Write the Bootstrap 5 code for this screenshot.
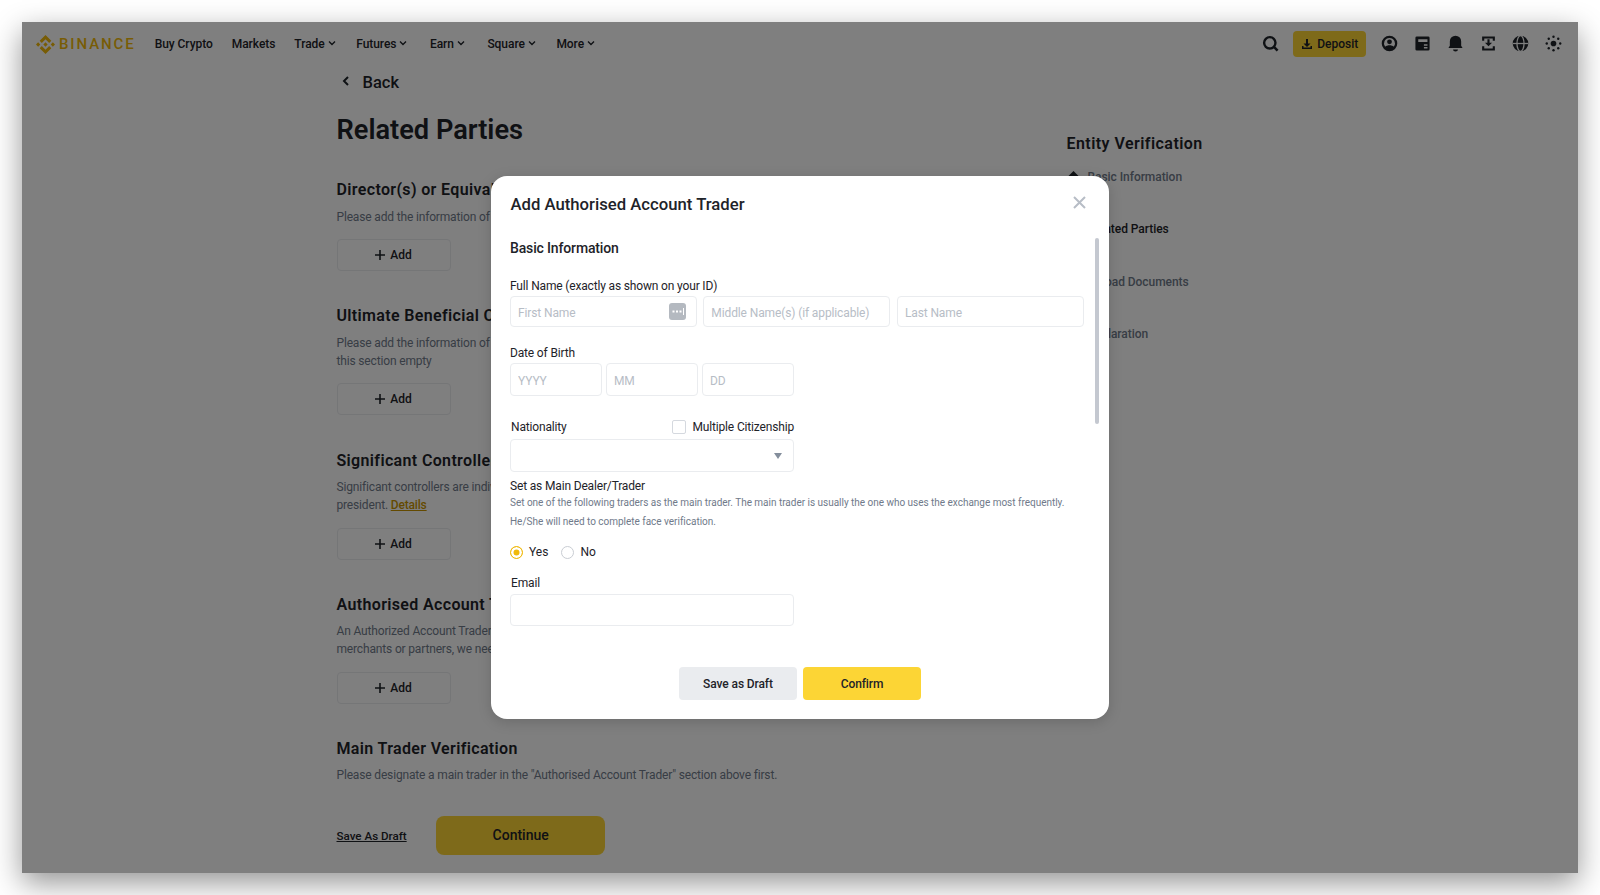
<!DOCTYPE html>
<html lang="en">
<head>
  <meta charset="UTF-8">
  <meta name="viewport" content="width=device-width, initial-scale=1.0">
  <title>Related Parties</title>
  <link href="https://cdn.jsdelivr.net/npm/bootstrap@5.3.0/dist/css/bootstrap.min.css" rel="stylesheet">
  <style>
    html, body { height: 100%; }
    body { background: #fff; font-family: Roboto, "Liberation Sans", sans-serif; font-size: 12px; color: #1e2329; padding: 22px; overflow: hidden; }
    .shot { position: relative; width: 1556px; height: 851px; background: #fff; overflow: hidden; }
    .shot-wrap { width: 1556px; height: 851px; box-shadow: 0 10px 28px rgba(0,0,0,.42); }

    /* top bar */
    .top-bar { height: 44px; padding: 0 16px 0 14px; }
    .logo-mark { width: 19px; height: 19px; fill: #f0b90b; margin-right: 4px; }
    .logo-text { font-size: 15px; font-weight: 500; letter-spacing: 1.9px; color: #f0b90b; line-height: 1; margin-right: 19px; }
    .menu-item { font-size: 12px; font-weight: 500; color: #1e2329; margin-right: 19px; white-space: nowrap; letter-spacing: -.05px; }
    .menu-drop { margin-right: 22.5px; }
    .menu-tight { margin-right: 20.5px; }
    .menu-item svg { width: 8px; height: 8px; margin-left: 3px; vertical-align: 1px; }
    .top-icon { width: 17px; height: 17px; display: block; fill: #1e2329; margin-bottom: 2px; }
    .deposit-btn { width: 73px; height: 26px; padding: 0; font-size: 12px; font-weight: 500; color: #1e2329; background: #fcd535; border: 0; border-radius: 4px; margin: 0 15px 0 14px; }
    .deposit-btn svg { width: 12px; height: 12px; fill: #1e2329; margin-right: 4px; }
    .icon-set { gap: 15.75px; }

    /* page under the dialog */
    .page-main { padding-left: 314.5px; }
    .left-col { width: 660px; }
    .back-row { font-size: 16.5px; font-weight: 500; line-height: 24px; padding: 5px 0 0 5px; }
    .back-row svg { width: 8px; height: 10px; margin-right: 13px; vertical-align: 2px; }
    .page-title { font-size: 27.2px; font-weight: 600; line-height: 36px; margin: 17px 0 0; }
    .sect-title { font-size: 16px; font-weight: 600; line-height: 24px; margin: 0 0 6px; letter-spacing: .35px; }
    .sect-text { font-size: 12px; line-height: 18px; color: #707a8a; margin: 0; letter-spacing: -.16px; }
    .sect-text a { color: #c99400; font-weight: 500; }
    .sect { margin-top: 33px; }
    .sect-first { margin-top: 30px; }
    .sect-wide { margin-top: 34px; }
    .sect-near .sect-title { margin-bottom: 5px; }
    .add-btn { width: 114px; height: 32px; margin-top: 13px; padding: 0; border: 1px solid #eaecef; border-radius: 4px; background: #fff; font-size: 12px; font-weight: 500; color: #1e2329; }
    .sect-near .add-btn { margin-top: 14px; }
    .add-btn svg { width: 10px; height: 10px; margin-right: 5px; vertical-align: -1px; }
    .page-actions { margin-top: 32px; }
    .draft-link { font-size: 11.6px; font-weight: 500; color: #1e2329; text-decoration: underline; padding-top: 2px; }
    .continue-btn { width: 169px; height: 39px; margin-left: 29.5px; padding: 0; border: 0; border-radius: 8px; background: #fcd535; font-size: 14px; font-weight: 500; color: #1e2329; }
    .side-col { margin-left: 70px; padding-top: 66px; width: 200px; }
    .side-title { font-size: 16px; font-weight: 600; line-height: 24px; margin: 0; letter-spacing: .45px; }
    .step-row { position: relative; font-size: 12px; font-weight: 500; line-height: 18px; color: #707a8a; padding-left: 21px; height: 52.4px; letter-spacing: -.05px; }
    .step-row.is-now { color: #1e2329; }
    .step-first { margin-top: 12px; }
    .step-dot { position: absolute; left: 0; top: 3px; width: 13px; height: 13px; fill: #1e2329; }

    /* dialog */
    .dim-layer { position: absolute; inset: 0; background: rgba(0,0,0,.5); }
    .add-dialog { position: relative; width: 618px; height: 543px; background: #fff; border: 0; border-radius: 16px; box-shadow: 0 3px 14px rgba(0,0,0,.16); color: #1e2329; overflow: hidden; }
    .dialog-title { font-size: 16.7px; font-weight: 500; line-height: 24px; position: absolute; left: 19.5px; top: 17px; margin: 0; }
    .dialog-close { position: absolute; left: 582px; top: 20px; width: 13px; height: 13px; padding: 0; border: 0; background: none; }
    .dialog-close svg { display: block; width: 13px; height: 13px; }
    .dialog-body { padding: 62px 24px 0 19px; }
    .block-title { font-size: 14px; font-weight: 500; line-height: 20px; margin: 0 0 20px; letter-spacing: -.15px; }
    .fld-label { font-size: 12px; line-height: 16px; margin: 0; display: block; letter-spacing: -.16px; }
    .dob-label { margin-top: 18px; }
    .fld { height: 31px; padding: 2px 7px 0; font-size: 12px; border: 1px solid #eaecef; border-radius: 4px; background-color: #fff; box-shadow: none; color: #1e2329; letter-spacing: -.12px; }
    .fld::placeholder { color: #b7bdc6; opacity: 1; }
    .fld-tall { height: 33px; }
    .name-row { width: 574px; gap: 6.5px; margin-top: 2px; }
    .name-row > * { flex: 1 1 33%; min-width: 0; }
    .dob-row { width: 284px; gap: 4px; margin-top: 2px; }
    .dob-row > * { flex: 1 1 33%; min-width: 0; }
    .narrow-box { width: 284px; }
    .key-badge { position: absolute; left: 159px; top: 7px; width: 17px; height: 17px; }
    .nation-row { margin-top: 22px; padding-left: 1px; }
    .multi-check { margin: 0; min-height: 0; padding: 0; gap: 6px; letter-spacing: -.16px; }
    .multi-check .form-check-input { width: 14px; height: 14px; margin: 0; float: none; border: 1px solid #d5d9df; border-radius: 2px; }
    .nation-select { height: 33px; margin-top: 3px; background-image: url("data:image/svg+xml,%3Csvg xmlns='http://www.w3.org/2000/svg' viewBox='0 0 8 6'%3E%3Cpath fill='%23848e9c' d='M0 0h8L4 6z'/%3E%3C/svg%3E"); background-size: 8px 6px; background-position: right 11px center; }
    .trader-head { margin-top: 6px; }
    .trader-note { font-size: 10px; line-height: 19px; color: #707a8a; margin: -1.5px 0 0; white-space: nowrap; letter-spacing: -.02px; }
    .radio-row { margin-top: 12.5px; gap: 13px; }
    .radio-opt { min-height: 0; margin: 0; padding: 0; gap: 6px; }
    .radio-opt .form-check-input { float: none; width: 13px; height: 13px; margin: 0; border: 1px solid #c9cdd3; }
    .radio-opt .form-check-input:checked { background-image: none; background-color: #f0b90b; border-color: #f0b90b; box-shadow: inset 0 0 0 2.5px #fff; }
    .email-label { margin-top: 14px; padding-left: 1px; }
    .email-box { height: 32px; margin-top: 3px; }
    .dialog-foot { position: absolute; left: 188px; top: 491px; gap: 6px; }
    .foot-btn { width: 118px; height: 33px; padding: 0; border: 0; border-radius: 4px; font-size: 12px; font-weight: 500; color: #1e2329; letter-spacing: -.1px; }
    .foot-ghost { background: #eaecef; }
    .foot-main { background: #fcd535; }
    .fake-scroll { position: absolute; left: 604px; top: 62px; width: 4px; height: 186px; border-radius: 2px; background: #c4c8d0; }
  </style>
</head>
<body>
  <div class="shot-wrap">
    <div class="shot">
      <!-- Top bar -->
      <div class="top-bar d-flex align-items-center">
        <svg class="logo-mark" viewBox="6 6 20 20"><path d="M12.116 14.404L16 10.52l3.886 3.886 2.26-2.26L16 6l-6.144 6.144 2.26 2.26zM6 16l2.26-2.26L10.52 16l-2.26 2.26L6 16zm6.116 1.596L16 21.48l3.886-3.886 2.26 2.259L16 26l-6.144-6.144-.003-.003 2.263-2.257zM21.48 16l2.26-2.26L26 16l-2.26 2.26L21.48 16zm-3.188-.002h.002V16L16 18.294l-2.291-2.29-.004-.004.004-.003.401-.402.195-.195L16 13.706l2.293 2.293z"/></svg>
        <span class="logo-text">BINANCE</span>
        <span class="menu-item">Buy Crypto</span>
        <span class="menu-item">Markets</span>
        <span class="menu-item menu-tight">Trade<svg viewBox="0 0 8 8"><path d="M1 2.5l3 3 3-3" fill="none" stroke="#1e2329" stroke-width="1.4"/></svg></span>
        <span class="menu-item menu-drop">Futures<svg viewBox="0 0 8 8"><path d="M1 2.5l3 3 3-3" fill="none" stroke="#1e2329" stroke-width="1.4"/></svg></span>
        <span class="menu-item menu-drop">Earn<svg viewBox="0 0 8 8"><path d="M1 2.5l3 3 3-3" fill="none" stroke="#1e2329" stroke-width="1.4"/></svg></span>
        <span class="menu-item menu-tight">Square<svg viewBox="0 0 8 8"><path d="M1 2.5l3 3 3-3" fill="none" stroke="#1e2329" stroke-width="1.4"/></svg></span>
        <span class="menu-item">More<svg viewBox="0 0 8 8"><path d="M1 2.5l3 3 3-3" fill="none" stroke="#1e2329" stroke-width="1.4"/></svg></span>
        <div class="ms-auto d-flex align-items-center">
          <svg class="top-icon" viewBox="0 0 24 24"><circle cx="11" cy="11" r="8" fill="none" stroke="#1e2329" stroke-width="3.4"/><path d="M16.5 16.5L22 22" stroke="#1e2329" stroke-width="3.6"/></svg>
          <button class="btn deposit-btn d-flex align-items-center justify-content-center" type="button"><svg viewBox="0 0 24 24"><path d="M10 2h4v9h5l-7 7-7-7h5zM2 16h3v3h14v-3h3v6H2z"/></svg>Deposit</button>
          <div class="icon-set d-flex">
            <svg class="top-icon" viewBox="0 0 24 24"><path fill-rule="evenodd" d="M12 1a11 11 0 100 22 11 11 0 000-22zm0 3.200a7.800 7.800 0 016.200 12.500C16.800 15.200 14.500 14.500 12 14.500s-4.800.7-6.200 2.200A7.800 7.800 0 0112 4.200zm0 2a3.400 3.400 0 100 6.800 3.400 3.400 0 000-6.800z"/></svg>
            <svg class="top-icon" viewBox="0 0 24 24"><path fill-rule="evenodd" d="M4 2h16a2 2 0 012 2v16a2 2 0 01-2 2H4a2 2 0 01-2-2V4a2 2 0 012-2zm2 4v4h13V6zm8 7v2h5v-2zm0 4v2h5v-2z"/></svg>
            <svg class="top-icon" viewBox="0 0 24 24"><path d="M12 1a8 8 0 00-8 8v6l-2 3.500h20L20 15V9a8 8 0 00-8-8zM8.500 20.500a3.500 2.800 0 007 0z"/></svg>
            <svg class="top-icon" viewBox="0 0 24 24"><path d="M3 2h18v6h-3V5H6v3H3zM3 16h3v3h12v-3h3v6H3zM10.500 6h3v5H17l-5 5-5-5h3.500z"/></svg>
            <svg class="top-icon" viewBox="0 0 24 24"><circle cx="12" cy="12" r="11"/><path d="M1 12h22" stroke="#fff" stroke-width="1.800"/><ellipse cx="12" cy="12" rx="5" ry="11" fill="none" stroke="#fff" stroke-width="1.800"/></svg>
            <svg class="top-icon" viewBox="0 0 24 24"><circle cx="12" cy="12" r="4"/><circle cx="12" cy="2.500" r="1.700"/><circle cx="12" cy="21.500" r="1.700"/><circle cx="2.500" cy="12" r="1.700"/><circle cx="21.500" cy="12" r="1.700"/><circle cx="5.300" cy="5.300" r="1.700"/><circle cx="18.700" cy="5.300" r="1.700"/><circle cx="5.300" cy="18.700" r="1.700"/><circle cx="18.700" cy="18.700" r="1.700"/></svg>
          </div>
        </div>
      </div>

      <!-- Page content -->
      <div class="page-main d-flex">
        <div class="left-col">
          <div class="back-row"><svg viewBox="0 0 8 10"><path d="M6 1L2 5l4 4" fill="none" stroke="#1e2329" stroke-width="2"/></svg>Back</div>
          <h1 class="page-title">Related Parties</h1>

          <div class="sect sect-first">
            <h2 class="sect-title">Director(s) or Equivalent</h2>
            <p class="sect-text">Please add the information of all directors or equivalent persons.</p>
            <button class="btn add-btn" type="button"><svg viewBox="0 0 10 10"><path d="M5 0v10M0 5h10" stroke="#1e2329" stroke-width="1.6"/></svg>Add</button>
          </div>
          <div class="sect">
            <h2 class="sect-title">Ultimate Beneficial Owner(s)</h2>
            <p class="sect-text">Please add the information of all ultimate beneficial owners, otherwise leave<br>this section empty</p>
            <button class="btn add-btn" type="button"><svg viewBox="0 0 10 10"><path d="M5 0v10M0 5h10" stroke="#1e2329" stroke-width="1.6"/></svg>Add</button>
          </div>
          <div class="sect sect-wide sect-near">
            <h2 class="sect-title">Significant Controllers</h2>
            <p class="sect-text">Significant controllers are individuals such as a chief executive officer or<br>president. <a href="#">Details</a></p>
            <button class="btn add-btn" type="button"><svg viewBox="0 0 10 10"><path d="M5 0v10M0 5h10" stroke="#1e2329" stroke-width="1.6"/></svg>Add</button>
          </div>
          <div class="sect sect-near">
            <h2 class="sect-title">Authorised Account Trader</h2>
            <p class="sect-text">An Authorized Account Trader is a person who operates the account. For our<br>merchants or partners, we need their information too.</p>
            <button class="btn add-btn" type="button"><svg viewBox="0 0 10 10"><path d="M5 0v10M0 5h10" stroke="#1e2329" stroke-width="1.6"/></svg>Add</button>
          </div>
          <div class="sect sect-near">
            <h2 class="sect-title">Main Trader Verification</h2>
            <p class="sect-text">Please designate a main trader in the "Authorised Account Trader" section above first.</p>
          </div>
          <div class="page-actions d-flex align-items-center">
            <a class="draft-link" href="#">Save As Draft</a>
            <button class="btn continue-btn" type="button">Continue</button>
          </div>
        </div>

        <div class="side-col">
          <h2 class="side-title">Entity Verification</h2>
          <div class="step-row step-first"><svg class="step-dot" viewBox="0 0 13 13"><path d="M6.500 0L13 6.500 6.500 13 0 6.500z"/></svg>Basic Information</div>
          <div class="step-row is-now"><svg class="step-dot" viewBox="0 0 13 13"><path d="M6.500 0L13 6.500 6.500 13 0 6.500z"/></svg>Related Parties</div>
          <div class="step-row"><svg class="step-dot" viewBox="0 0 13 13"><path d="M6.500 0L13 6.500 6.500 13 0 6.500z"/></svg>Upload Documents</div>
          <div class="step-row"><svg class="step-dot" viewBox="0 0 13 13"><path d="M6.500 0L13 6.500 6.500 13 0 6.500z"/></svg>Declaration</div>
        </div>
      </div>

      <!-- Dialog over the page -->
      <div class="dim-layer d-flex align-items-center justify-content-center">
        <div class="add-dialog">
          <h5 class="dialog-title">Add Authorised Account Trader</h5>
          <button class="dialog-close" type="button" aria-label="Close"><svg viewBox="0 0 13 13"><path d="M1 1l11 11M12 1L1 12" stroke="#b7bdc6" stroke-width="2"/></svg></button>
          <div class="dialog-body">
            <h6 class="block-title">Basic Information</h6>
            <label class="fld-label">Full Name (exactly as shown on your ID)</label>
            <div class="name-row d-flex">
              <div class="position-relative">
                <input class="form-control fld" type="text" placeholder="First Name">
                <svg class="key-badge" viewBox="0 0 17 17"><rect width="17" height="17" rx="3" fill="#b4b9c0"/><rect x="3.500" y="7.500" width="2" height="2" fill="#fff"/><rect x="7" y="7.500" width="2" height="2" fill="#fff"/><rect x="10.500" y="7.500" width="2" height="2" fill="#fff"/><path d="M14.500 5v7" stroke="#fff" stroke-width="1"/></svg>
              </div>
              <input class="form-control fld" type="text" placeholder="Middle Name(s) (if applicable)">
              <input class="form-control fld" type="text" placeholder="Last Name">
            </div>
            <label class="fld-label dob-label">Date of Birth</label>
            <div class="dob-row d-flex">
              <input class="form-control fld fld-tall" type="text" placeholder="YYYY">
              <input class="form-control fld fld-tall" type="text" placeholder="MM">
              <input class="form-control fld fld-tall" type="text" placeholder="DD">
            </div>
            <div class="nation-row narrow-box d-flex align-items-center justify-content-between">
              <span class="fld-label">Nationality</span>
              <div class="form-check multi-check d-flex align-items-center">
                <input class="form-check-input" type="checkbox" id="multiCitizen">
                <label class="form-check-label" for="multiCitizen">Multiple Citizenship</label>
              </div>
            </div>
            <select class="form-select fld nation-select narrow-box"><option></option></select>
            <div class="fld-label trader-head">Set as Main Dealer/Trader</div>
            <p class="trader-note">Set one of the following traders as the main trader. The main trader is usually the one who uses the exchange most frequently.<br>He/She will need to complete face verification.</p>
            <div class="radio-row d-flex align-items-center">
              <div class="form-check radio-opt d-flex align-items-center">
                <input class="form-check-input" type="radio" name="mainTrader" id="mainYes" checked>
                <label class="form-check-label" for="mainYes">Yes</label>
              </div>
              <div class="form-check radio-opt d-flex align-items-center">
                <input class="form-check-input" type="radio" name="mainTrader" id="mainNo">
                <label class="form-check-label" for="mainNo">No</label>
              </div>
            </div>
            <label class="fld-label email-label">Email</label>
            <input class="form-control fld email-box narrow-box" type="text">
          </div>
          <div class="fake-scroll"></div>
          <div class="dialog-foot d-flex">
            <button class="btn foot-btn foot-ghost" type="button">Save as Draft</button>
            <button class="btn foot-btn foot-main" type="button">Confirm</button>
          </div>
        </div>
      </div>
    </div>
  </div>

  <script src="https://cdn.jsdelivr.net/npm/bootstrap@5.3.0/dist/js/bootstrap.bundle.min.js"></script>
</body>
</html>
